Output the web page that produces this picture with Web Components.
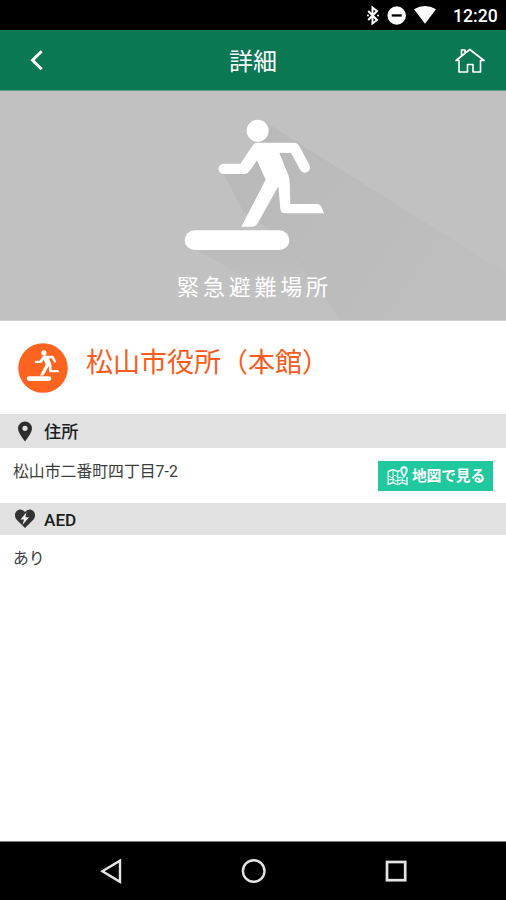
<!DOCTYPE html>
<html lang="ja">
<head>
<meta charset="utf-8">
<title>詳細</title>
<style>
body{margin:0;background:#fff;font-family:Roboto,"Noto Sans CJK JP",sans-serif;color:#333}
</style>
</head>
<body>
<evac-app></evac-app>
<script>
const define = (name, html) => customElements.define(name, class extends HTMLElement {
  constructor() {
    super();
    this.attachShadow({ mode: 'open' }).innerHTML = '<style>*{box-sizing:border-box}svg{display:block;flex:none}</style>' + html;
  }
});

const runner = `
<circle cx="263" cy="92" r="33"/>
<path d="M262 128H370Q382 128 388 138L418 195A15 15 0 0 1 391 210L363 159H328L354 223Q359 235 359 247L361 312H440Q450 312 454 321L462 340H345Q332 340 331 327L325 259L263 370Q257 380 247 380H214L287 239L261 181L238 214Q233 222 223 222H161A15 15 0 0 1 161 191H211L245 141Q252 128 262 128Z"/>
<rect x="44" y="391" width="314" height="59" rx="29.5"/>`;

define('status-bar', `
<style>:host{display:flex;height:30px;background:#000;color:#fff;justify-content:flex-end;align-items:center;padding-right:9px}
span{font:500 17.6px/30px Roboto,sans-serif;margin:2px 0 0 15px;width:44px;white-space:nowrap}</style>
<svg width="74" height="30" viewBox="0 0 74 30"><path d="M4.200 11l8.800 9-4.500 3.500V7.500l4.500 3.500-8.800 9" fill="none" stroke="#fff" stroke-width="2"/>
<circle cx="4" cy="15.500" r="1" fill="#fff"/><circle cx="14" cy="15.500" r="1" fill="#fff"/>
<circle cx="32.700" cy="15.500" r="9.200" fill="#fff"/><rect x="27.700" y="14.300" width="10" height="2.300" fill="#000"/>
<path d="M50 9.300Q61 2.500 72 9.300L61 23.800Z" fill="#fff"/></svg><span>12:20</span>`);

define('app-header', `
<style>:host{display:grid;grid-template-columns:1fr auto 1fr;align-items:center;height:61px;background:#0b7854;color:#fff;padding:0 21px 0 29px;border-bottom:1px solid #5d9c84}
h1{margin:0;font:400 24px/34px "Noto Sans CJK JP",sans-serif;transform:translateX(-4px)}.home{justify-self:end}</style>
<svg width="16" height="22" viewBox="0 0 16 22"><path d="M12.7 2.2L3.5 11.2L12.7 20.2" fill="none" stroke="#fff" stroke-width="3"/></svg>
<h1><slot></slot></h1>
<svg class="home" width="30" height="26" viewBox="0 0 30 26"><path d="M1 13.500L14.800 2.500L29 13.500H25.500V25H18V17.500H12.500V25H4V13.500ZM6.500 8.500V3H10V5.500" fill="none" stroke="#fff" stroke-width="1.600" stroke-linejoin="round"/></svg>`);

define('hero-panel', `
<style>:host{display:grid;height:230px;background:#c1c1c1;border-bottom:1px solid #d2d2d2;overflow:hidden}
svg,p{grid-area:1/1}p{margin:178px 0 0;text-align:center;color:#fff;font:400 22px/32px "Noto Sans CJK JP",sans-serif;letter-spacing:3.8px;padding-left:3px}</style>
<svg width="506" height="229" viewBox="0 0 506 229">
<defs><linearGradient id="g" gradientUnits="userSpaceOnUse" x1="240" y1="80" x2="460" y2="220"><stop stop-color="#b9b9b9"/><stop offset="1" stop-color="#bfbfbf"/></linearGradient>
<linearGradient id="s" gradientUnits="userSpaceOnUse" x1="0" y1="150" x2="0" y2="205"><stop stop-color="#bababa"/><stop offset="1" stop-color="#bababa" stop-opacity="0"/></linearGradient></defs>
<path d="M265 31L506 182V229H340L285 150L243 120L223 82L258 60Z" fill="url(#g)"/><path d="M191 156H290L340 229H320Z" fill="url(#s)"/>
<g fill="#fff" transform="translate(170 9) scale(.33333)">${runner}</g></svg>
<p><slot></slot></p>`);

define('place-title', `
<style>:host{display:flex;height:93px;padding:22px 18px 0;gap:18px}
h2{margin:-1px 0 0;color:#fa5c1e;font:400 27px/38px "Noto Sans CJK JP",sans-serif;white-space:nowrap}</style>
<svg width="50" height="50" viewBox="0 0 50 50"><circle cx="25" cy="25" r="24.8" fill="#fe641f"/><g fill="#fff" transform="translate(5.3 2.7) scale(.0782)">${runner}</g></svg>
<h2><slot></slot></h2>`);

define('section-bar', `
<style>:host{display:flex;height:var(--h,34px);background:#e1e1e1;align-items:center;padding-left:14px;gap:8px;color:#1c1c1c}
h3{margin:2px 0 0;font:500 17.2px/26px Roboto,"Noto Sans CJK JP",sans-serif}::slotted(svg){display:block}</style>
<slot name="icon"></slot><h3><slot></slot></h3>`);

define('detail-row', `
<style>:host{display:flex;justify-content:space-between;height:55px;padding:12px 13px 0;font:400 15.85px/24px Roboto,"Noto Sans CJK JP",sans-serif;color:#3c3c3c}</style>
<span><slot></slot></span><slot name="action"></slot>`);

define('map-button', `
<style>:host{display:flex;width:115px;height:30px;margin-top:1px;background:#1fc99d;color:#fff;align-items:center;padding-left:9px;gap:3px;font:700 14.8px/22px "Noto Sans CJK JP",sans-serif;white-space:nowrap;letter-spacing:-.2px}
span{margin-top:-2px}</style>
<svg width="22" height="22" viewBox="0 0 22 22" fill="none" stroke="#e9fff8" stroke-width="1.4"><path d="M13 5.5L10.5 6.5L6 4.5L1.2 6.5V19.5L6 17.5L10.8 19.8L15.2 17.5L20 19.5V12"/><path d="M6 5V17.5M10.8 7V19.5M15.2 12V17.5M2 11L5 13L8 10L12 13L14 12M2 15L6 14L9 16L14 15L19 16" stroke-width="1"/><path d="M17 11.5Q14.2 7.500 14.200 5A2.800 2.800 0 0 1 19.800 5Q19.800 7.500 17 11.500Z" stroke-width="2"/></svg>
<span><slot></slot></span>`);

define('android-nav', `
<style>:host{display:flex;height:59px;background:#000;border-top:1px solid #777;justify-content:space-between;padding:16px 97px 0 99px}</style>
<svg width="26" height="28" viewBox="0 0 26 28"><path d="M3.4 13.2L21 2.6V23.8Z" fill="none" stroke="#e4e4e4" stroke-width="2.4"/></svg>
<svg width="26" height="28" viewBox="0 0 26 28"><circle cx="12.7" cy="13" r="10.8" fill="none" stroke="#e4e4e4" stroke-width="2.4"/></svg>
<svg width="26" height="28" viewBox="0 0 26 28"><rect x="4" y="4" width="18.2" height="18.2" fill="none" stroke="#e4e4e4" stroke-width="2.7"/></svg>`);

define('evac-app', `
<style>:host{display:flex;flex-direction:column;height:900px;background:#fff}main{flex:1}.aed{--h:32px}</style>
<status-bar></status-bar>
<app-header>詳細</app-header>
<hero-panel>緊急避難場所</hero-panel>
<main>
<place-title>松山市役所（本館）</place-title>
<section-bar><svg slot="icon" width="22" height="24" viewBox="0 0 22 24"><path fill-rule="evenodd" d="M11 22.500Q4 13.500 4 9.500A7 7 0 0 1 18 9.500Q18 13.500 11 22.500ZM11 6.700A2.600 2.600 0 1 0 11 11.900A2.600 2.600 0 1 0 11 6.700Z" fill="#2d2d2d"/></svg>住所</section-bar>
<detail-row>松山市二番町四丁目7-2<map-button slot="action">地図で見る</map-button></detail-row>
<section-bar class="aed"><svg slot="icon" width="22" height="22" viewBox="0 0 22 22"><path d="M11 20L2.500 11.500C-.5 8 1 2 6 1.500Q9 1.300 11 4Q13 1.300 16 1.500C21 2 22.500 8 19.500 11.500Z" fill="#333"/><path d="M12.300 4.500L6.500 11.500H10L8.500 17L15 9.300H11.500Z" fill="#eee"/></svg>AED</section-bar>
<detail-row>あり</detail-row>
</main>
<android-nav></android-nav>
`);
</script>
</body>
</html>
